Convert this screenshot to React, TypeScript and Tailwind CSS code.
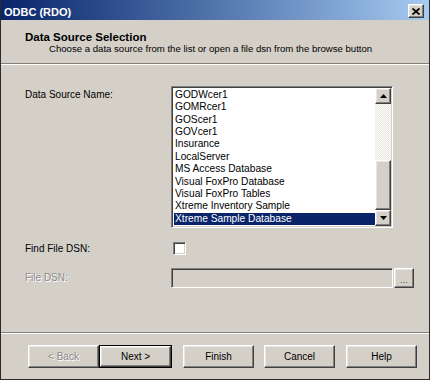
const raised =
  'border border-t-white border-l-white border-r-[#404040] border-b-[#404040] shadow-[inset_-1px_-1px_0_#808080,inset_1px_1px_0_#e8e6e0] bg-[#d4d0c8]';
const sunken =
  'border border-t-[#808080] border-l-[#808080] border-r-white border-b-white shadow-[inset_1px_1px_0_#404040,inset_-1px_-1px_0_#d4d0c8]';

const sources = [
  'GODWcer1',
  'GOMRcer1',
  'GOScer1',
  'GOVcer1',
  'Insurance',
  'LocalServer',
  'MS Access Database',
  'Visual FoxPro Database',
  'Visual FoxPro Tables',
  'Xtreme Inventory Sample',
  'Xtreme Sample Database',
];

function Arrow({ up }: { up?: boolean }) {
  return (
    <svg width="7" height="4" viewBox="0 0 7 4">
      <path d={up ? 'M3.5 0 L7 4 L0 4 Z' : 'M0 0 L7 0 L3.5 4 Z'} fill="#000" />
    </svg>
  );
}

export default function App() {
  const selected = 'Xtreme Sample Database';

  return (
    <div className="w-[430px] h-[380px] bg-[#d4d0c8] flex flex-col border-x border-b border-[#2a2a2a] font-['Liberation_Sans',Arial,sans-serif] text-black overflow-hidden">
      {/* title bar */}
      <div className="h-[20px] shrink-0 bg-linear-to-r from-[#0a246a] to-[#a6caf0] flex items-start justify-between pl-[3px] pr-[5px]">
        <span className="pt-[6px] leading-[13px] text-[11px] font-bold text-white">ODBC (RDO)</span>
        <button className={`${raised} mt-[4px] w-[16px] h-[14px] flex items-center justify-center`}>
          <svg width="8" height="7" viewBox="0 0 8 7">
            <path d="M0.5 0.5 L7.5 6.5 M7.5 0.5 L0.5 6.5" stroke="#000" strokeWidth="1.8" />
          </svg>
        </button>
      </div>

      {/* header */}
      <div className="shrink-0 pl-[24px] pt-[11px] pb-[8px]">
        <div className="text-[11.5px] leading-[12px] font-bold">Data Source Selection</div>
        <div className="ml-[24px] text-[9.6px] leading-[12px] whitespace-nowrap">
          Choose a data source from the list or open a file dsn from the browse button
        </div>
      </div>
      <div className="h-[2px] shrink-0 border-t border-t-[#808080] border-b border-b-white" />

      {/* form */}
      <div className="shrink-0 pl-[24px] grid grid-cols-[146px_auto] text-[10px]">
        <div className="mt-[21px] pt-[3px] leading-[12px]">Data Source Name:</div>
        <div className={`${sunken} mt-[21px] w-[222px] h-[142px] bg-white flex p-[1px]`}>
          <div className="flex-1 pt-[1px] pl-px text-[10.2px]">
            {sources.map((s) => (
              <div
                key={s}
                className={`h-[12.36px] leading-[12.36px] pl-px whitespace-nowrap ${
                  s === selected ? 'bg-[#0a246a] text-white' : ''
                }`}
              >
                {s}
              </div>
            ))}
          </div>
          <div className="w-[16px] flex flex-col">
            <div className={`${raised} h-[16px] flex items-center justify-center`}>
              <Arrow up />
            </div>
            <div className="flex-1 bg-[repeating-conic-gradient(#ffffff_0_25%,#e6e3dd_0_50%)] bg-size-[2px_2px]" />
            <div className={`${raised} h-[50px]`} />
            <div className={`${raised} h-[16px] flex items-center justify-center`}>
              <Arrow />
            </div>
          </div>
        </div>

        <div className="mt-[14px] h-[13px] flex items-center leading-[12px]">Find File DSN:</div>
        <div className="mt-[14px]">
          <div className={`${sunken} ml-[2px] w-[13px] h-[13px] bg-white`} />
        </div>

        <div className="mt-[13px] h-[20px] flex items-center leading-[12px] text-[#8c8c8c] [text-shadow:1px_1px_0_#ffffff]">
          File DSN:
        </div>
        <div className="mt-[13px] flex gap-px">
          <div className={`${sunken} w-[222px] h-[20px] bg-[#d4d0c8]`} />
          <button className={`${raised} w-[20px] h-[20px] flex items-end justify-center pb-[3px] text-[9px] leading-[8px] text-[#404040]`}>
            ...
          </button>
        </div>
      </div>

      <div className="flex-1" />
      <div className="h-[2px] shrink-0 border-t border-t-[#808080] border-b border-b-white" />

      {/* buttons */}
      <div className="shrink-0 flex pl-[27px] pt-[11px] pb-[11px] text-[10px]">
        <button className={`${raised} w-[71px] h-[23px] text-[#8c8c8c] [text-shadow:1px_1px_0_#ffffff]`}>
          &lt; Back
        </button>
        <div className="w-[73px] h-[23px] border border-black">
          <button className={`${raised} w-full h-full`}>Next &gt;</button>
        </div>
        <button className={`${raised} ml-[11px] w-[71px] h-[23px]`}>Finish</button>
        <button className={`${raised} ml-[10px] w-[71px] h-[23px]`}>Cancel</button>
        <button className={`${raised} ml-[11px] w-[71px] h-[23px]`}>Help</button>
      </div>
    </div>
  );
}
